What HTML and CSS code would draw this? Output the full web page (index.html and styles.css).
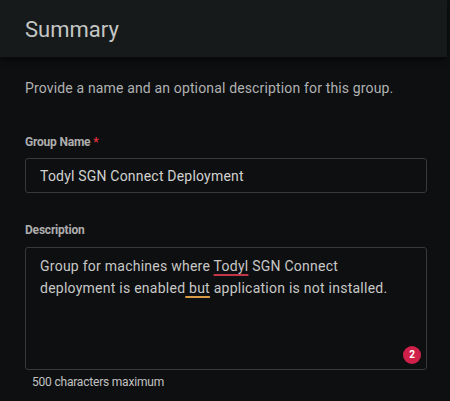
FILE: index.html
```html
<!DOCTYPE html>
<html>
<head>
<meta charset="utf-8">
<link rel="stylesheet" href="styles.css">
</head>
<body>
<div class="page">
  <header class="header"><h1 class="title">Summary</h1></header>
  <section class="content">
    <p class="intro">Provide a name and an optional description for this group.</p>
    <label class="label">Group Name <span class="req">*</span></label>
    <div class="input">Todyl SGN Connect Deployment</div>
    <label class="label label-desc">Description</label>
    <div class="textarea">
      <div class="ta-text">Group for machines where <span class="spell">Todyl</span> SGN Connect deployment is enabled<span class="grammar"> but</span> application is not installed.</div>
      <span class="badge">2</span>
    </div>
    <div class="hint">500 characters maximum</div>
  </section>
</div>
</body>
</html>
```
FILE: styles.css
```css
html, body {
  margin: 0;
  padding: 0;
  background: #0e0f11;
}
body {
  font-family: Roboto, "Liberation Sans", sans-serif;
  width: 450px;
  height: 401px;
  overflow: hidden;
}
.page {
  display: flex;
  flex-direction: column;
}
.header {
  height: 57px;
  background: #171a1b;
  margin-right: 3px;
  box-shadow: 0 3px 6px rgba(0,0,0,0.5);
  display: flex;
  align-items: center;
  padding-left: 25px;
}
.title {
  margin: 0;
  font-size: 22px;
  font-weight: 400;
  color: #c4c6c4;
  padding-top: 2px;
}
.content {
  padding: 0 23px 0 25px;
  display: flex;
  flex-direction: column;
}
.intro {
  margin: 0;
  padding-top: 22px;
  font-size: 14px;
  line-height: 18px;
  color: #b0b2b2;
  letter-spacing: 0.15px;
}
.label {
  font-size: 12px;
  font-weight: 700;
  color: #aeaeae;
  margin-top: 37px;
  line-height: 16px;
  letter-spacing: -0.2px;
}
.label-desc {
  margin-top: 29px;
}
.req {
  color: #e0323f;
}
.input {
  margin-top: 8px;
  height: 35px;
  box-sizing: border-box;
  border: 1px solid #38393b;
  border-radius: 3px;
  padding: 0 14px;
  display: flex;
  align-items: center;
  font-size: 14px;
  color: #d2d2d0;
  letter-spacing: 0.2px;
}
.textarea {
  position: relative;
  margin-top: 9px;
  height: 123px;
  box-sizing: border-box;
  border: 1px solid #38393b;
  border-radius: 3px;
  padding: 7px 16px 7px 14px;
  font-size: 14px;
  line-height: 22px;
  color: #c8c8c6;
  letter-spacing: 0.25px;
}
.spell {
  text-decoration: underline;
  text-decoration-color: #c5354a;
  text-decoration-thickness: 2px;
  text-underline-offset: 3px;
}
.grammar {
  text-decoration: underline;
  text-decoration-color: #d89a44;
  text-decoration-thickness: 2px;
  text-underline-offset: 3px;
}
.badge {
  position: absolute;
  right: 5px;
  bottom: 5px;
  width: 18px;
  height: 18px;
  border-radius: 50%;
  background: #d0204a;
  color: #fff;
  font-size: 10px;
  font-weight: 700;
  line-height: 18px;
  text-align: center;
  letter-spacing: 0;
}
.hint {
  margin-top: 4px;
  padding-left: 7px;
  font-size: 12px;
  color: #c2c2c2;
  line-height: 16px;
  letter-spacing: -0.2px;
}
```
